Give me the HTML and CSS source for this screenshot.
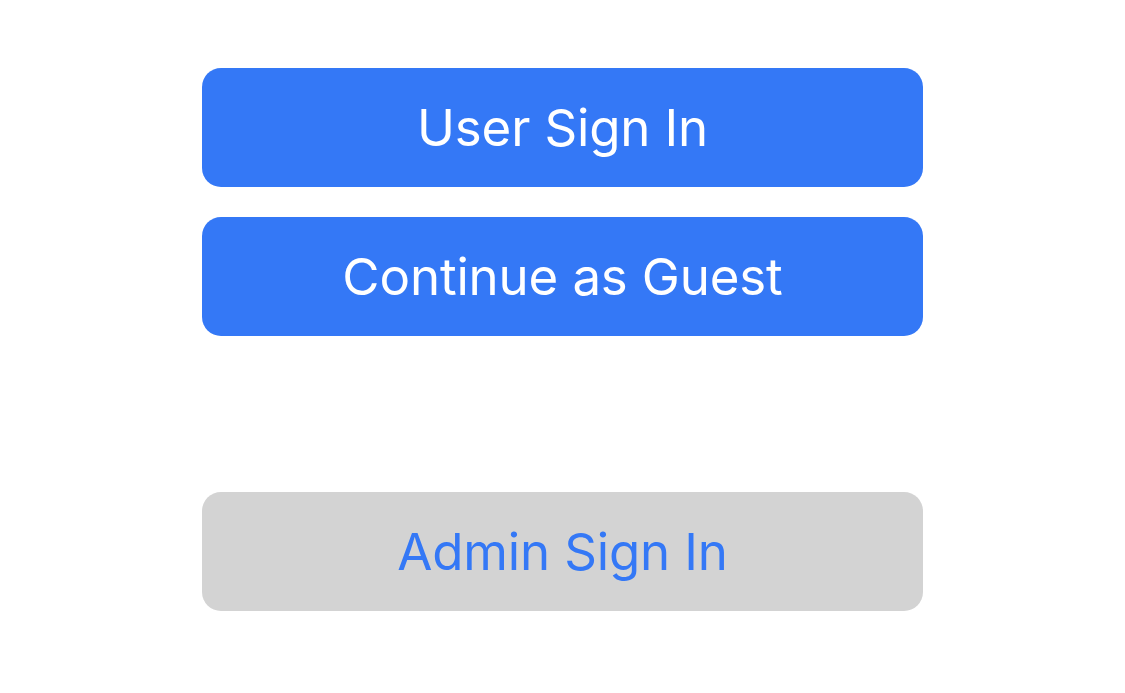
FILE: index.html
```html
<!DOCTYPE html>
<html>
<head>
<meta charset="utf-8">
<link rel="stylesheet" href="styles.css">
</head>
<body>
<main class="stack">
  <button class="btn btn-primary">User Sign In</button>
  <button class="btn btn-primary">Continue as Guest</button>
  <button class="btn btn-secondary admin">Admin Sign In</button>
</main>
</body>
</html>
```
FILE: styles.css
```css
html, body {
  margin: 0;
  padding: 0;
  background: #ffffff;
}
.stack {
  display: flex;
  flex-direction: column;
  gap: 30px;
  width: 721px;
  margin-left: 202px;
  padding-top: 68px;
}
.btn {
  height: 119px;
  border: none;
  border-radius: 19px;
  font-family: Inter, "Noto Sans", sans-serif;
  font-size: 51px;
  font-weight: 400;
  letter-spacing: -0.15px;
  display: flex;
  align-items: center;
  justify-content: center;
  padding: 0;
  cursor: pointer;
}
.btn-primary {
  background: #3478f6;
  color: #ffffff;
}
.btn-secondary {
  background: #d3d3d3;
  color: #3478f6;
}
.admin {
  margin-top: 126px;
}
```
